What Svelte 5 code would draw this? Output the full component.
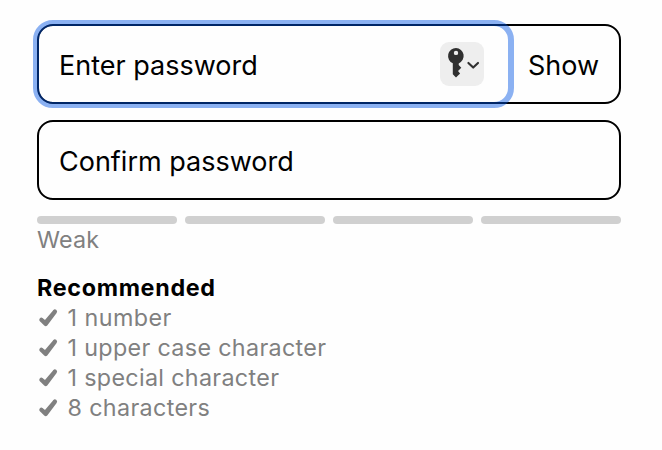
<script>
  const bars = [0, 1, 2, 3];
  const rules = [
    { text: '1 number', spacing: 0.46 },
    { text: '1 upper case character', spacing: 0.34 },
    { text: '1 special character', spacing: 0.33 },
    { text: '8 characters', spacing: 0.36 }
  ];
</script>

<main>
  <div class="field">
    <div class="entry">
      <span class="enter">Enter password</span>
      <span class="key">
        <svg width="44" height="44" viewBox="0 0 44 44">
          <path
            fill="#303030"
            fill-rule="evenodd"
            d="M16 6a8 8 0 0 0-3.2 15.3V32.3l3.2 3.2 4.1-4.1-2.1-2.5 3.3-3.1-2.6-2.8v-1.6A8 8 0 0 0 16 6Zm0 2.7a2.2 2.2 0 1 1 0 4.4a2.2 2.2 0 0 1 0-4.4Z"
          />
          <path d="M28.4 20.9l4.8 4.7 4.8-4.7" fill="none" stroke="#303030" stroke-width="2.1" stroke-linecap="round" stroke-linejoin="round" />
        </svg>
      </span>
    </div>
    <span class="show">Show</span>
  </div>
  <div class="field second"><span class="confirm">Confirm password</span></div>
  <div class="meter">
    {#each bars as bar (bar)}<i></i>{/each}
  </div>
  <div class="level">Weak</div>
  <div class="title">Recommended</div>
  <ul>
    {#each rules as rule (rule.text)}
      <li>
        <svg width="21" height="20" viewBox="0 0 21 20">
          <path d="M4.4 11.8L8.7 16L17.9 3.6L8.3 15Z" fill="#808080" stroke="#808080" stroke-width="4.3" stroke-linecap="round" stroke-linejoin="round" />
        </svg>
        <span style:letter-spacing="{rule.spacing}px">{rule.text}</span>
      </li>
    {/each}
  </ul>
</main>

<style>
  :global(body) {
    margin: 0;
    background: #fefefe;
  }
  main {
    box-sizing: border-box;
    width: 662px;
    height: 450px;
    padding: 24px 41px 0 37px;
    font-family: Inter, 'Liberation Sans', sans-serif;
    font-size: 23.3px;
    font-weight: 400;
    line-height: 30px;
    color: #000;
    white-space: nowrap;
  }
  .field {
    box-sizing: border-box;
    height: 80px;
    border: 2px solid #000;
    border-radius: 16px;
    display: flex;
    align-items: center;
    font-size: 27px;
  }
  .second {
    margin-top: 16px;
    padding-left: 20px;
  }
  .enter,
  .show,
  .confirm {
    padding-top: 4px;
  }
  .entry {
    position: relative;
    box-sizing: border-box;
    width: 469px;
    height: 76px;
    padding: 0 24px 0 20px;
    display: flex;
    align-items: center;
    justify-content: space-between;
  }
  .entry::after {
    content: '';
    position: absolute;
    inset: -6px;
    border: 6px solid rgba(0, 84, 229, 0.45);
    border-radius: 20px;
  }
  .key {
    width: 44px;
    height: 44px;
    border-radius: 9px;
    background: #eee;
  }
  .key svg {
    display: block;
  }
  .show {
    margin-left: 20px;
  }
  .meter {
    display: flex;
    gap: 8px;
    margin-top: 16px;
  }
  .meter i {
    flex: 1;
    height: 8px;
    border-radius: 4px;
    background: #d0d0d0;
  }
  .level {
    padding-top: 1px;
    letter-spacing: 0.2px;
    color: #808080;
  }
  .title {
    margin-top: 18px;
    font-weight: 700;
    letter-spacing: 0.7px;
  }
  ul {
    margin: 0;
    padding: 0;
    list-style: none;
    color: #808080;
  }
  li {
    display: flex;
    align-items: center;
    gap: 9.5px;
    height: 30px;
  }
</style>
